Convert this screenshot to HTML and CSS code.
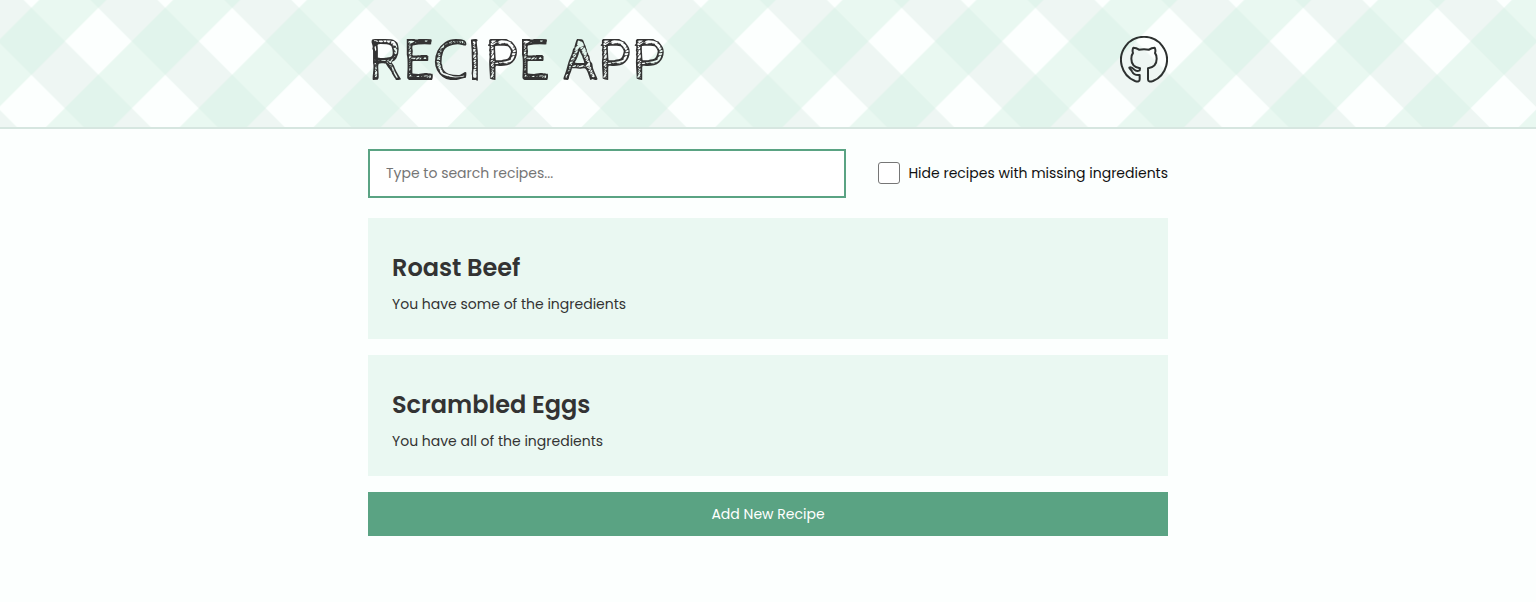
FILE: index.html
```html
<!DOCTYPE html>
<html lang="en">
<head>
<meta charset="utf-8">
<title>Recipe App</title>
<link rel="stylesheet" href="styles.css">
</head>
<body>
<header class="header">
  <svg class="gingham" width="100%" height="127" aria-hidden="true">
    <defs>
      <pattern id="check" width="133.88" height="133.88" patternUnits="userSpaceOnUse" patternTransform="translate(31.4 41.3)">
        <rect width="133.88" height="133.88" fill="#e9f8f1"/>
        <path fill="#eef6f3" d="M33.47 0L66.94 33.47 33.47 66.94 0 33.47ZM100.41 66.94L133.88 100.41 100.41 133.88 66.94 100.41Z"/>
        <path fill="#e1f4ec" d="M0 0H33.47L0 33.47ZM133.88 0V33.47L100.41 0ZM0 133.88V100.41L33.47 133.88ZM133.88 133.88H100.41L133.88 100.41ZM66.94 33.47L100.41 66.94 66.94 100.41 33.47 66.94Z"/>
        <path fill="#fcfffe" d="M33.47 0H100.41L66.94 33.47ZM33.47 133.88H100.41L66.94 100.41ZM0 33.47V100.41L33.47 66.94ZM133.88 33.47V100.41L100.41 66.94Z"/>
      </pattern>
    </defs>
    <rect width="100%" height="127" fill="url(#check)"/>
  </svg>
  <div class="header-inner">
    <h1 class="title">Recipe App</h1>
    <a class="github" href="#" aria-label="GitHub">
      <svg width="48" height="48" viewBox="0 0 144 144">
        <path class="cat" d="M84 97V130Q84 140 99 135A69 69 0 1 0 45 135Q59 140 59 130V117C43 119 39 112 36 106C34 101 27 98 28 95C33 92 39 97 43 101C48 106 53 106 59 103L60 97C43 94 34 84 34 68Q34 57 39 51Q36 43 40 35Q49 35 57 41Q72 38 87 41Q95 35 104 35Q108 43 105 51Q110 57 110 68C110 84 101 94 84 97Z"/>
      </svg>
    </a>
  </div>
</header>
<main class="content">
  <div class="filters">
    <input class="search" type="text" placeholder="Type to search recipes...">
    <label class="toggle"><input class="check" type="checkbox"><span class="toggle-text">Hide recipes with missing ingredients</span></label>
  </div>
  <section class="card">
    <h2 class="card-title">Roast Beef</h2>
    <p class="card-note">You have some of the ingredients</p>
  </section>
  <section class="card">
    <h2 class="card-title">Scrambled Eggs</h2>
    <p class="card-note">You have all of the ingredients</p>
  </section>
  <button class="add">Add New Recipe</button>
</main>
</body>
</html>
```
FILE: styles.css
```css
* { box-sizing: border-box; }
body {
  margin: 0;
  background: #fcfffe;
  color: #333;
  font-family: Poppins, Inter, sans-serif;
  font-size: 14px;
  font-weight: 400;
}
.header {
  position: relative;
  height: 129px;
  border-bottom: 2px solid #d6e6e0;
}
.gingham { position: absolute; left: 0; top: 0; }
.header-inner {
  position: relative;
  width: 800px;
  margin: 0 auto;
  padding-top: 30px;
  display: flex;
  justify-content: space-between;
}
.title {
  margin: 2px 0 0;
  height: 60px;
  font-family: "Cabin Sketch", Lato, sans-serif;
  font-size: 60px;
  line-height: 60px;
  font-weight: 400;
  text-transform: uppercase;
}
.github { margin-top: 6px; height: 48px; }
.github svg { display: block; }
.cat { fill: none; stroke: #2d3130; stroke-width: 6; stroke-linejoin: round; }
.content { width: 800px; margin: 0 auto; padding-top: 20px; }
.filters { display: flex; align-items: center; gap: 32px; margin-bottom: 20px; }
.search {
  flex: 1;
  min-width: 0;
  height: 48.6px;
  padding: 0 16px;
  border: 2px solid #5aa383;
  background: #fff;
  font: inherit;
  outline: none;
}
.search::placeholder { color: #757575; }
.toggle { display: flex; align-items: center; gap: 8px; color: #111; white-space: nowrap; }
.check {
  appearance: none;
  width: 22px;
  height: 22px;
  margin: 0;
  border: 1px solid #767676;
  border-radius: 3px;
  background: #fff;
}
.card {
  height: 121px;
  margin-bottom: 16px;
  padding: 32px 24px 0;
  background: #eaf8f2;
}
.card-title { margin: 0; font-size: 24px; line-height: 36px; font-weight: 600; }
.card-note { margin: 6px 0 0; line-height: 24px; }
.add {
  display: block;
  width: 100%;
  height: 44.8px;
  padding: 2px 0 0;
  border: 0;
  background: #5aa383;
  color: #fff;
  font: inherit;
}
```
